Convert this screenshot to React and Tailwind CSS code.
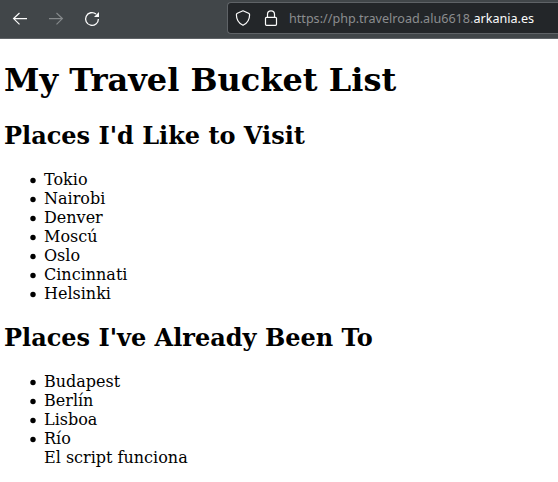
import React from "react";

const wishlist = ["Tokio", "Nairobi", "Denver", "Moscú", "Oslo", "Cincinnati", "Helsinki"];
const visited = ["Budapest", "Berlín", "Lisboa", "Río"];

function Toolbar() {
  return (
    <header className="flex h-[39px] items-start border-b border-[#5f6367] bg-[#414649] text-[#fcfcfc]">
      <div className="flex w-[227px] shrink-0 gap-5 pt-[11px] pl-3">
        <svg width="16" height="16" viewBox="0 0 16 16" fill="none" stroke="currentColor" strokeWidth="1.2">
          <path d="M15 7.6H1.5M7.5 2L1.6 7.6L7.5 13.4" />
        </svg>
        <svg className="text-[#85898b]" width="16" height="16" viewBox="0 0 16 16" fill="none" stroke="currentColor" strokeWidth="1.2">
          <path d="M1 7.6H14.5M8.5 2L14.4 7.6L8.5 13.4" />
        </svg>
        <svg width="16" height="16" viewBox="0 0 16 16" fill="none" stroke="currentColor" strokeWidth="1.3">
          <path d="M14.4 8A6.4 6.4 0 1 1 12 3" />
          <path d="M15 1V6H10Z" fill="currentColor" stroke="none" />
        </svg>
      </div>
      <div className="mt-[2px] flex h-8 flex-1 items-center rounded-l border border-r-0 border-[#5f6367] bg-[#232629] pl-[7px]">
        <svg width="16" height="16" viewBox="0 0 16 16" fill="none" stroke="currentColor" strokeWidth="1.2" strokeLinejoin="round">
          <path d="M8 .8L13.6 3.2Q14.6 3.7 14.6 4.8C14.6 9.5 13 13 8 15.3C3 13 1.4 9.5 1.4 4.8Q1.4 3.7 2.4 3.2Z" />
        </svg>
        <svg className="ml-3" width="16" height="16" viewBox="0 0 16 16" fill="none" stroke="currentColor" strokeWidth="1.2">
          <rect x="2.5" y="7.3" width="11" height="8" rx="1" />
          <path d="M4.5 7.3V4.3A3.5 3.5 0 0 1 11.5 4.3V7.3" />
        </svg>
        <span className="relative top-px ml-[10px] whitespace-nowrap font-['Noto_Sans',sans-serif] text-[12.6px] text-[#8b8d8f]">
          https://php.travelroad.alu6618.<span className="text-[#fcfcfc]">arkania.es</span>
        </span>
      </div>
    </header>
  );
}

function Places({ title, places, children }) {
  return (
    <section>
      <h2 className="mb-5 text-2xl leading-7 font-bold">{title}</h2>
      <ul className="pl-10 text-base leading-[19px]">
        {places.map((place) => (
          <li
            key={place}
            className="before:mr-2 before:-ml-[14px] before:inline-block before:size-1.5 before:-translate-y-[1.5px] before:scale-90 before:rounded-full before:bg-black before:content-['']"
          >
            {place}
          </li>
        ))}
        {children}
      </ul>
    </section>
  );
}

export default function App() {
  return (
    <div className="h-[482px] overflow-hidden bg-white font-['DejaVu_Serif',serif] text-black">
      <Toolbar />
      <main className="pt-[22px] pl-1">
        <h1 className="mb-[23px] text-[32px] leading-[38px] font-bold">My Travel Bucket List</h1>
        <div className="flex flex-col gap-[21px]">
          <Places title="Places I'd Like to Visit" places={wishlist} />
          <Places title="Places I've Already Been To" places={visited}>
            <li>El script funciona</li>
          </Places>
        </div>
      </main>
    </div>
  );
}
